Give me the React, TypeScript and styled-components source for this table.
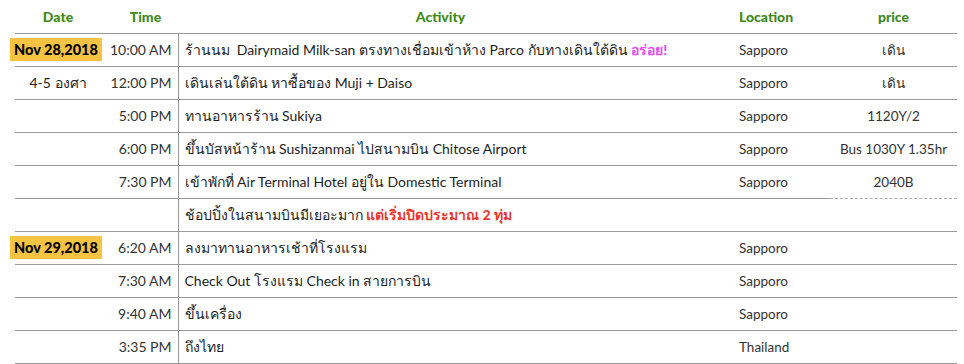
import styled, { createGlobalStyle } from 'styled-components'

const GlobalStyle = createGlobalStyle`
    body {
        margin: 0;
        background: #fff;
        font-family: Lato, 'Noto Sans', 'DejaVu Sans', sans-serif;
        color: #1a1a1a;
    }
`

const StyledTable = styled.table`
    border-collapse: collapse;
    margin-left: 15px;
    width: 942px;
    table-layout: fixed;
    font-size: 14px;
`

const StyledHeadCell = styled.th<{ $align?: string; $pad?: string }>`
    height: 33px;
    padding: ${({ $pad }) => $pad || '0 6px'};
    color: #3f8a1a;
    font-weight: 900;
    font-size: 14px;
    text-align: ${({ $align }) => $align || 'center'};
    border-bottom: 1px solid #999;
    box-sizing: border-box;
`

const StyledRow = styled.tr`
    height: 33px;
`

const StyledCell = styled.td<{ $align?: string; $dotted?: boolean }>`
    padding: 0 6px;
    height: 32px;
    text-align: ${({ $align }) => $align || 'left'};
    border-bottom: ${({ $dotted }) => ($dotted ? '1px dashed #aaa' : '1px solid #999')};
    white-space: nowrap;
    font-weight: 400;
    color: #1e1e1e;
`

const StyledTimeCell = styled(StyledCell)`
    border-right: 1px solid #999;
    color: #333;
`

const StyledLight = styled(StyledCell)`
    font-size: 13.5px;
    color: #333;
`

const StyledBadge = styled.span`
    display: inline-block;
    margin-left: -11px;
    width: 92px;
    height: 23px;
    line-height: 23px;
    background: #f6c343;
    color: #000;
    font-weight: 900;
    font-size: 14.5px;
    text-align: center;
`

const StyledPink = styled.span`
    color: #e84cf0;
    font-weight: 900;
`

const StyledRed = styled.span`
    color: #e8392f;
    font-weight: 900;
`

type Row = {
    date?: React.ReactNode
    time: string
    activity: React.ReactNode
    location?: string
    price?: string
    priceDotted?: boolean
}

const rows: Row[] = [
    {
        date: <StyledBadge>Nov 28,2018</StyledBadge>,
        time: '10:00 AM',
        activity: (
            <>
                ร้านนม&nbsp; Dairymaid Milk-san ตรงทางเชื่อมเข้าห้าง Parco กับทางเดินใต้ดิน{' '}
                <StyledPink>อร่อย!</StyledPink>
            </>
        ),
        location: 'Sapporo',
        price: 'เดิน',
    },
    {
        date: '4-5 องศา',
        time: '12:00 PM',
        activity: 'เดินเล่นใต้ดิน หาซื้อของ Muji + Daiso',
        location: 'Sapporo',
        price: 'เดิน',
    },
    { time: '5:00 PM', activity: 'ทานอาหารร้าน Sukiya', location: 'Sapporo', price: '1120Y/2' },
    {
        time: '6:00 PM',
        activity: 'ขึ้นบัสหน้าร้าน Sushizanmai ไปสนามบิน Chitose Airport',
        location: 'Sapporo',
        price: 'Bus 1030Y 1.35hr',
    },
    {
        time: '7:30 PM',
        activity: 'เข้าพักที่ Air Terminal Hotel อยู่ใน Domestic Terminal',
        location: 'Sapporo',
        price: '2040B',
        priceDotted: true,
    },
    {
        time: '',
        activity: (
            <>
                ช้อปปิ้งในสนามบินมีเยอะมาก <StyledRed>แต่เริ่มปิดประมาณ 2 ทุ่ม</StyledRed>
            </>
        ),
    },
    {
        date: <StyledBadge>Nov 29,2018</StyledBadge>,
        time: '6:20 AM',
        activity: 'ลงมาทานอาหารเช้าที่โรงแรม',
        location: 'Sapporo',
    },
    { time: '7:30 AM', activity: 'Check Out โรงแรม Check in สายการบิน', location: 'Sapporo' },
    { time: '9:40 AM', activity: 'ขึ้นเครื่อง', location: 'Sapporo' },
    { time: '3:35 PM', activity: 'ถึงไทย', location: 'Thailand' },
]

export default function App() {
    return (
        <>
            <GlobalStyle />
            <StyledTable>
                <colgroup>
                    <col style={{ width: 86 }} />
                    <col style={{ width: 77 }} />
                    <col style={{ width: 555 }} />
                    <col style={{ width: 97 }} />
                    <col style={{ width: 127 }} />
                </colgroup>
                <thead>
                    <tr>
                        <StyledHeadCell>Date</StyledHeadCell>
                        <StyledHeadCell $pad="0 0 0 12px">Time</StyledHeadCell>
                        <StyledHeadCell $pad="0 30px 0 0">Activity</StyledHeadCell>
                        <StyledHeadCell $align="left">Location</StyledHeadCell>
                        <StyledHeadCell>price</StyledHeadCell>
                    </tr>
                </thead>
                <tbody>
                    {rows.map((row, i) => (
                        <StyledRow key={i}>
                            <StyledCell $align="center">{row.date}</StyledCell>
                            <StyledTimeCell $align="right">{row.time}</StyledTimeCell>
                            <StyledCell>{row.activity}</StyledCell>
                            <StyledLight>{row.location}</StyledLight>
                            <StyledLight $align="center" $dotted={row.priceDotted}>
                                {row.price}
                            </StyledLight>
                        </StyledRow>
                    ))}
                </tbody>
            </StyledTable>
        </>
    )
}
